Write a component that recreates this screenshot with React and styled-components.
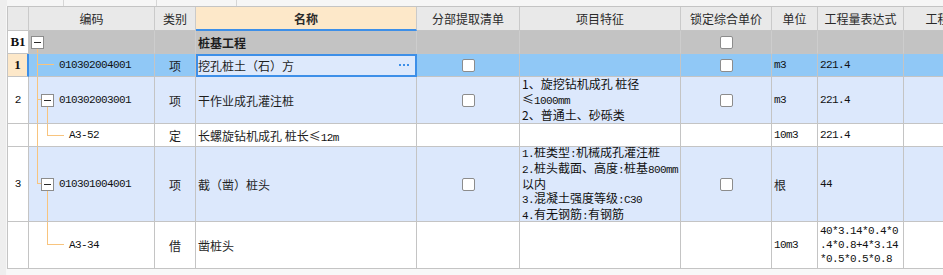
import React from "react";
import styled, { createGlobalStyle } from "styled-components";

const GlobalStyle = createGlobalStyle`
  html, body {
    margin: 0;
    padding: 0;
    background: #f8f8f8;
  }
  body {
    font-family: "Noto Sans CJK SC", "Liberation Sans", sans-serif;
    font-size: 12px;
    color: #1e1e1e;
  }
`;

const COLS = "21px 126px 41px 221px 103px 161px 91px 46px 86px 80px";
const BLUE = "#3d8fe8";
const GRID = "#c4c4c4";

const Page = styled.div`
  width: 943px;
  height: 275px;
  overflow: hidden;
  display: flex;
  flex-direction: column;
`;

const TopStrip = styled.div`
  height: 6px;
  flex: none;
  display: grid;
  grid-template-columns: 7px 57px 93px 80px 1fr;
  background: #f6f6f6;
`;

const StripCell = styled.div`
  box-sizing: border-box;
  border-right: ${(p) => (p.$sep ? "1px solid #d6d6d6" : "none")};
  background: ${(p) => p.$bg || "transparent"};
`;

const Main = styled.div`
  flex: 1;
  display: flex;
  min-height: 0;
`;

const Gutter = styled.div`
  width: 7px;
  flex: none;
  background: #eeeeee;
  border-right: 1px solid #f7f7f7;
  box-sizing: border-box;
`;

const Table = styled.div`
  flex: 1;
  align-self: flex-start;
  overflow: hidden;
  border-left: 1px solid ${GRID};
  border-top: 1px solid ${GRID};
`;

const Row = styled.div`
  display: grid;
  grid-template-columns: ${COLS};
  height: ${(p) => p.$h}px;
  background: ${(p) => p.$bg || "#ffffff"};
`;

const Cell = styled.div`
  box-sizing: border-box;
  position: relative;
  display: flex;
  align-items: center;
  justify-content: ${(p) => p.$align || "flex-start"};
  padding: 0 2px;
  overflow: hidden;
  white-space: nowrap;
  border-right: 1px solid ${(p) => p.$line || GRID};
  border-bottom: 1px solid ${GRID};
  background: ${(p) => p.$bg || "transparent"};
  font-weight: ${(p) => (p.$bold ? 700 : 400)};
`;

const HeadCell = styled(Cell)`
  justify-content: center;
  background: ${(p) => (p.$active ? "#fde8c9" : "#e9e9e9")};
  color: #2a2a2a;
  border-right-color: #cacaca;
  border-bottom: ${(p) => (p.$active ? `2px solid ${BLUE}` : "1px solid #c4c4c4")};
`;

const RowHead = styled(Cell)`
  justify-content: center;
  padding: 0;
  background: ${(p) => p.$bg || "#ffffff"};
  border-right: ${(p) => (p.$current ? `2px solid ${BLUE}` : `1px solid ${GRID}`)};
  font-family: ${(p) =>
    p.$bold ? '"Liberation Serif", serif' : '"Liberation Mono", monospace'};
  font-size: ${(p) => (p.$bold ? "13px" : "11px")};
  color: #111;
`;

const CodeCell = styled(Cell)`
  padding-left: ${(p) => p.$indent}px;
`;

const NameCell = styled(Cell)`
  justify-content: space-between;
  ${(p) =>
    p.$selected &&
    `
    background: #dde9fc;
    outline: 2px solid ${BLUE};
    outline-offset: -2px;
    z-index: 1;
    padding-right: 7px;
  `}
`;

const Mono = styled.span`
  position: relative;
  font-family: "Liberation Mono", monospace;
  font-size: 11px;
  letter-spacing: -0.6px;
  color: #111;
`;

const Lines = styled.div`
  display: flex;
  flex-direction: column;
  line-height: ${(p) => p.$lh}px;
  font-family: ${(p) =>
    p.$mono ? '"Liberation Mono", monospace' : "inherit"};
  font-size: ${(p) => (p.$mono ? "11px" : "12px")};
  letter-spacing: ${(p) => (p.$mono ? "-0.6px" : "0")};
  color: #111;
`;

const ExpandBox = styled.span`
  position: relative;
  z-index: 1;
  box-sizing: border-box;
  width: 13px;
  height: 13px;
  margin-right: 5px;
  flex: none;
  display: flex;
  align-items: center;
  justify-content: center;
  border: 1px solid #8c8c8c;
  background: #ffffff;

  &::before {
    content: "";
    width: 7px;
    height: 1px;
    background: #2a2a2a;
  }
`;

const Check = styled.span`
  box-sizing: border-box;
  width: 13px;
  height: 13px;
  border: 1px solid #8c8c8c;
  border-radius: 2px;
  background: #ffffff;
`;

const TreeSvg = styled.svg`
  position: absolute;
  left: 0;
  top: 0;
  pointer-events: none;
`;

function Tree({ h, lines }) {
  return (
    <TreeSvg width="125" height={h} viewBox={`0 0 125 ${h}`}>
      {lines.map(([x1, y1, x2, y2], i) => (
        <line
          key={i}
          x1={x1}
          y1={y1}
          x2={x2}
          y2={y2}
          stroke="#f8c47e"
          strokeWidth="1"
          shapeRendering="crispEdges"
        />
      ))}
    </TreeSvg>
  );
}

function Dots() {
  return (
    <svg width="10" height="2" viewBox="0 0 10 2">
      <rect x="0" y="0" width="2" height="2" fill={BLUE} />
      <rect x="4" y="0" width="2" height="2" fill={BLUE} />
      <rect x="8" y="0" width="2" height="2" fill={BLUE} />
    </svg>
  );
}

const headers = [
  "",
  "编码",
  "类别",
  "名称",
  "分部提取清单",
  "项目特征",
  "锁定综合单价",
  "单位",
  "工程量表达式",
  "工程量",
];

const LIGHT = "#dce8fc";

export default function App() {
  return (
    <Page>
      <GlobalStyle />
      <TopStrip>
        <StripCell $bg="#eeeeee" />
        <StripCell $sep />
        <StripCell $sep />
        <StripCell $sep />
        <StripCell />
      </TopStrip>
      <Main>
        <Gutter />
        <Table>
          <Row $h={24}>
            {headers.map((h, i) => (
              <HeadCell key={i} $active={i === 3} $bold={i === 3}>
                {h}
              </HeadCell>
            ))}
          </Row>

          <Row $h={23} $bg="#c3c3c3">
            <RowHead $bold $bg="#ffffff">B1</RowHead>
            <CodeCell $indent={2} $line="#cdcdcd">
              <Tree h={22} lines={[[8.5, 17, 8.5, 22]]} />
              <ExpandBox />
            </CodeCell>
            <Cell $line="#cdcdcd" />
            <Cell $line="#cdcdcd" $bold>桩基工程</Cell>
            <Cell $line="#cdcdcd" />
            <Cell $line="#cdcdcd" />
            <Cell $line="#cdcdcd" $align="center">
              <Check />
            </Cell>
            <Cell $line="#cdcdcd" />
            <Cell $line="#cdcdcd" />
            <Cell $line="#cdcdcd" />
          </Row>

          <Row $h={23} $bg="#90c8f6">
            <RowHead $bold $current $bg="#fde8c9">1</RowHead>
            <CodeCell $indent={30}>
              <Tree
                h={22}
                lines={[
                  [8.5, 0, 8.5, 22],
                  [8, 10.5, 25, 10.5],
                ]}
              />
              <Mono>010302004001</Mono>
            </CodeCell>
            <Cell $align="center">项</Cell>
            <NameCell $selected>
              <span>挖孔桩土（石）方</span>
              <Dots />
            </NameCell>
            <Cell $align="center">
              <Check />
            </Cell>
            <Cell />
            <Cell $align="center">
              <Check />
            </Cell>
            <Cell>
              <Mono>m3</Mono>
            </Cell>
            <Cell>
              <Mono>221.4</Mono>
            </Cell>
            <Cell />
          </Row>

          <Row $h={47} $bg={LIGHT}>
            <RowHead $bg="#ffffff">2</RowHead>
            <CodeCell $indent={12}>
              <Tree
                h={46}
                lines={[
                  [8.5, 0, 8.5, 46],
                  [8, 22.5, 12, 22.5],
                  [18.5, 29, 18.5, 46],
                ]}
              />
              <ExpandBox />
              <Mono>010302003001</Mono>
            </CodeCell>
            <Cell $align="center">项</Cell>
            <NameCell>干作业成孔灌注桩</NameCell>
            <Cell $align="center">
              <Check />
            </Cell>
            <Cell>
              <Lines $lh={14.5}>
                <span>1、旋挖钻机成孔 桩径</span>
                <span>
                  ≤<Mono>1000mm</Mono>
                </span>
                <span>2、普通土、砂砾类</span>
              </Lines>
            </Cell>
            <Cell $align="center">
              <Check />
            </Cell>
            <Cell>
              <Mono>m3</Mono>
            </Cell>
            <Cell>
              <Mono>221.4</Mono>
            </Cell>
            <Cell />
          </Row>

          <Row $h={23}>
            <RowHead />
            <CodeCell $indent={40}>
              <Tree
                h={22}
                lines={[
                  [8.5, 0, 8.5, 22],
                  [18.5, 0, 18.5, 11],
                  [18, 11.5, 35, 11.5],
                ]}
              />
              <Mono>A3-52</Mono>
            </CodeCell>
            <Cell $align="center">定</Cell>
            <NameCell>
              <span>
                长螺旋钻机成孔 桩长≤<Mono>12m</Mono>
              </span>
            </NameCell>
            <Cell />
            <Cell />
            <Cell />
            <Cell>
              <Mono>10m3</Mono>
            </Cell>
            <Cell>
              <Mono>221.4</Mono>
            </Cell>
            <Cell />
          </Row>

          <Row $h={75} $bg={LIGHT}>
            <RowHead $bg="#ffffff">3</RowHead>
            <CodeCell $indent={12}>
              <Tree
                h={74}
                lines={[
                  [8.5, 0, 8.5, 36],
                  [8, 36.5, 12, 36.5],
                  [18.5, 43, 18.5, 74],
                ]}
              />
              <ExpandBox />
              <Mono>010301004001</Mono>
            </CodeCell>
            <Cell $align="center">项</Cell>
            <NameCell>截（凿）桩头</NameCell>
            <Cell $align="center">
              <Check />
            </Cell>
            <Cell>
              <Lines $lh={14.2}>
                <span>
                  <Mono>1.</Mono>桩类型<Mono>:</Mono>机械成孔灌注桩
                </span>
                <span>
                  <Mono>2.</Mono>桩头截面、高度<Mono>:</Mono>桩基<Mono>800mm</Mono>
                </span>
                <span>以内</span>
                <span>
                  <Mono>3.</Mono>混凝土强度等级<Mono>:C30</Mono>
                </span>
                <span>
                  <Mono>4.</Mono>有无钢筋<Mono>:</Mono>有钢筋
                </span>
              </Lines>
            </Cell>
            <Cell $align="center">
              <Check />
            </Cell>
            <Cell>根</Cell>
            <Cell>
              <Mono>44</Mono>
            </Cell>
            <Cell />
          </Row>

          <Row $h={47}>
            <RowHead />
            <CodeCell $indent={40}>
              <Tree
                h={46}
                lines={[
                  [18.5, 0, 18.5, 22],
                  [18, 22.5, 35, 22.5],
                ]}
              />
              <Mono>A3-34</Mono>
            </CodeCell>
            <Cell $align="center">借</Cell>
            <NameCell>凿桩头</NameCell>
            <Cell />
            <Cell />
            <Cell />
            <Cell>
              <Mono>10m3</Mono>
            </Cell>
            <Cell>
              <Lines $mono $lh={14}>
                <span>40*3.14*0.4*0</span>
                <span>.4*0.8+4*3.14</span>
                <span>*0.5*0.5*0.8</span>
              </Lines>
            </Cell>
            <Cell />
          </Row>
        </Table>
      </Main>
    </Page>
  );
}
